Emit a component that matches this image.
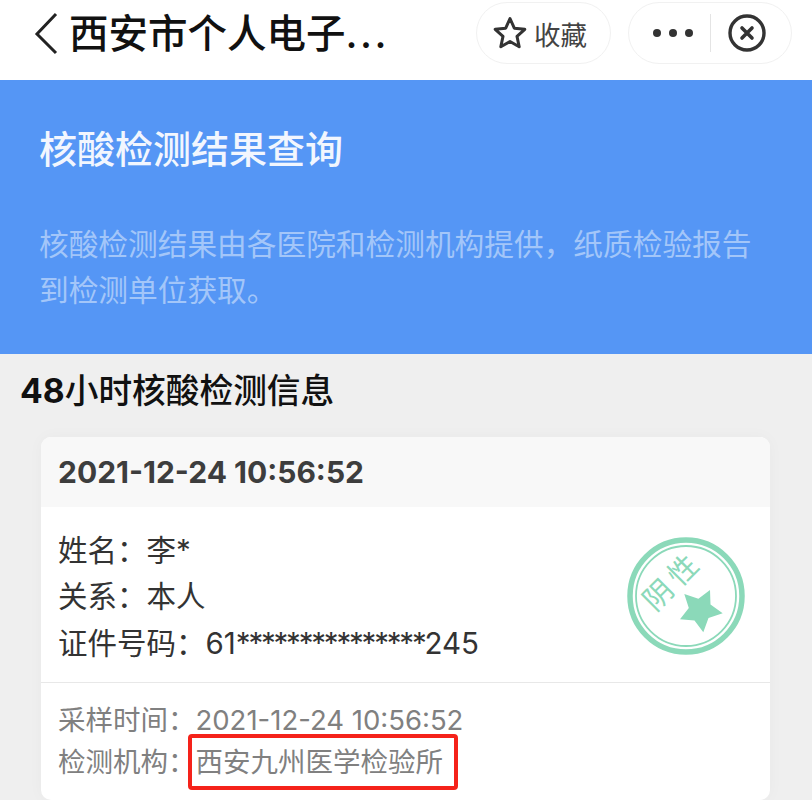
<div class="page">
  <header class="nav">
    <svg class="back" width="28" height="44" viewBox="0 0 28 44"><path d="M24 3 L5 23 L24 42" fill="none" stroke="#222" stroke-width="3"/></svg>
    <div class="nav-title">西安市个人电子<span class="more">...</span></div>
    <div class="pill fav">
      <svg width="36" height="36" viewBox="0 0 36 36"><path d="M18 3.500 L22.300 13.200 L32.800 14.300 L25 21.400 L27.200 31.800 L18 26.500 L8.800 31.800 L11 21.400 L3.200 14.300 L13.700 13.200 Z" fill="none" stroke="#333" stroke-width="3" stroke-linejoin="round"/></svg>
      <span>收藏</span>
    </div>
    <div class="pill menu">
      <div class="dots"><i></i><i></i><i></i></div>
      <div class="sep"></div>
      <svg width="40" height="40" viewBox="0 0 40 40"><circle cx="20" cy="20" r="17" fill="none" stroke="#333" stroke-width="3.400"/><path d="M15 15 L25 25 M25 15 L15 25" stroke="#333" stroke-width="3.600" stroke-linecap="round"/></svg>
    </div>
  </header>

  <section class="banner">
    <h1>核酸检测结果查询</h1>
    <p>核酸检测结果由各医院和检测机构提供，纸质检验报告到检测单位获取。</p>
  </section>

  <h2 class="section-title"><b>48</b>小时核酸检测信息</h2>

  <div class="card">
    <div class="card-head">2021-12-24 10:56:52</div>
    <div class="card-body">
      <div class="info">
        <div>姓名：李*</div>
        <div>关系：本人</div>
        <div>证件号码：61<span class="stars">***************</span>245</div>
      </div>
      <svg class="stamp" width="118" height="118" viewBox="0 0 118 118">
        <circle cx="59" cy="59" r="56" fill="none" stroke="#8bd9b9" stroke-width="5.500"/>
        <circle cx="59" cy="59" r="50" fill="none" stroke="#8bd9b9" stroke-width="1.800"/>
        <text x="46.500" y="45.500" transform="rotate(-45 43.500 45.500)" font-size="29" letter-spacing="6" fill="#8bd9b9" text-anchor="middle" dominant-baseline="central">阴性</text>
        <path d="M83 53 L83.500 67.500 L95.700 76.300 L81.500 81 L76.300 95.300 L67.500 83.500 L53 82.300 L61.800 71.100 L57.300 57 L71.400 61.800 Z" fill="#8bd9b9" />
      </svg>
    </div>
    <div class="card-foot">
      <div>采样时间：<span class="val">2021-12-24 10:56:52</span></div>
      <div>检测机构：<span class="val boxed">西安九州医学检验所</span></div>
    </div>
  </div>
</div>

<style>
  :global(body) {
    margin: 0;
    background: #f0f0f0;
  }
  .page {
    width: 812px;
    height: 800px;
    overflow: hidden;
    font-family: Inter, "Noto Sans CJK SC", sans-serif;
    background: #efefef;
  }
  .nav {
    height: 80px;
    background: #fff;
    display: flex;
    align-items: flex-start;
    box-sizing: border-box;
    padding: 2px 20px 0 32px;
  }
  .back {
    margin-top: 9px;
    flex: none;
  }
  .nav-title {
    margin-left: 9px;
    margin-top: 7px;
    flex: 1;
    font-size: 39.500px;
    line-height: 50px;
    color: #111;
    font-weight: 500;
    white-space: nowrap;
  }
  .more {
    letter-spacing: 2.500px;
  }
  .pill {
    height: 62px;
    box-sizing: border-box;
    border: 1px solid #f1f1f1;
    border-radius: 31px;
    display: flex;
    align-items: center;
    flex: none;
  }
  .fav {
    width: 135px;
    padding-left: 15px;
    gap: 6px;
    color: #444;
    font-size: 26.500px;
  }
  .menu {
    width: 164px;
    margin-left: 17px;
    padding-left: 24px;
  }
  .dots {
    display: flex;
    gap: 8px;
  }
  .dots i {
    width: 8px;
    height: 8px;
    border-radius: 50%;
    background: #333;
  }
  .sep {
    width: 1px;
    height: 38px;
    background: #e4e4e4;
    margin: 0 16px 0 17px;
  }
  .banner {
    height: 274px;
    box-sizing: border-box;
    background: #5596f5;
    padding: 45px 39px 0;
  }
  h1 {
    margin: 0;
    font-size: 38px;
    line-height: 48px;
    font-weight: 500;
    color: #f2f6fe;
  }
  .banner p {
    margin: 48px 0 0;
    font-size: 29.700px;
    line-height: 46px;
    color: #a3c6f9;
  }
  .section-title {
    margin: 0;
    padding: 16px 0 0 20px;
    font-size: 33.700px;
    line-height: 42px;
    font-weight: 500;
    color: #111;
  }
  .section-title b {
    font-weight: 700;
  }
  .card {
    margin: 25px 42px 0 41px;
    background: #fff;
    border-radius: 10px;
    box-shadow: 0 0 16px rgba(0, 0, 0, 0.03);
    overflow: hidden;
  }
  .card-head {
    height: 70px;
    background: #f8f8f8;
    box-sizing: border-box;
    padding: 16px 17px 0;
    font-size: 30px;
    line-height: 38px;
    font-weight: 700;
    color: #3d3d3d;
  }
  .card-body {
    display: flex;
    justify-content: space-between;
    align-items: center;
    height: 176px;
    box-sizing: border-box;
    padding: 4px 25px 0 17px;
    border-bottom: 1px solid #e8e8e8;
  }
  .info {
    font-size: 29.500px;
    line-height: 46.500px;
    color: #333;
  }
  .stars {
    letter-spacing: -2.200px;
  }
  .stamp {
    margin-top: -1px;
  }
  .card-foot {
    padding: 16px 17px 17px;
    font-size: 27.500px;
    line-height: 42px;
    color: #808080;
  }
  .val {
    position: relative;
  }
  .boxed::after {
    content: "";
    position: absolute;
    left: -8px;
    right: -15px;
    top: -11px;
    bottom: -11px;
    border: 4px solid #f5221a;
    border-radius: 4px;
  }
</style>
